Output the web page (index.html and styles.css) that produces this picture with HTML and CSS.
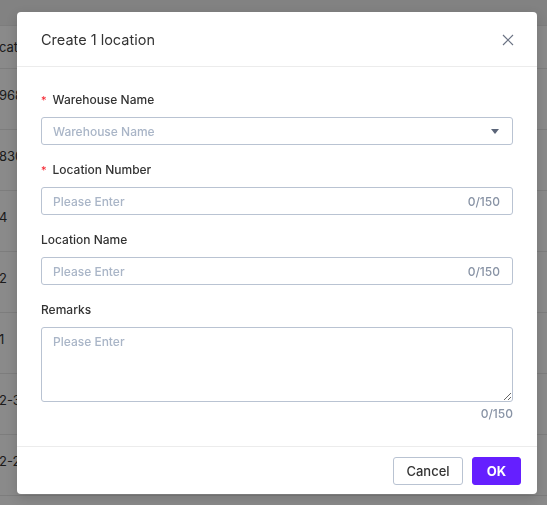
FILE: index.html
```html
<!DOCTYPE html>
<html>
<head>
<meta charset="utf-8">
<link rel="stylesheet" href="styles.css">
</head>
<body>
<div class="page">
  <div class="topbar"></div>
  <div class="row head"><span class="cell">cat</span></div>
  <div class="row"><span class="cell">968</span></div>
  <div class="row"><span class="cell">830</span></div>
  <div class="row"><span class="cell">4</span></div>
  <div class="row"><span class="cell">2</span></div>
  <div class="row"><span class="cell">1</span></div>
  <div class="row"><span class="cell">2-3</span></div>
  <div class="row"><span class="cell">2-2</span></div>
  <div class="row"><span class="cell"></span></div>
</div>
<div class="overlay"></div>
<div class="dialog">
  <div class="dialog-header">
    <span class="title">Create 1 location</span>
    <svg class="close" width="12" height="12" viewBox="0 0 12 12"><path d="M1 1L11 11M11 1L1 11" stroke="#6b7384" stroke-width="1.2" fill="none"/></svg>
  </div>
  <div class="dialog-body">
    <div class="field">
      <label class="label"><span class="req">*</span>Warehouse Name</label>
      <div class="control">
        <input class="inp" placeholder="Warehouse Name">
        <svg class="caret" width="8" height="5" viewBox="0 0 8 5"><path d="M0 0H8L4 5Z" fill="#5b6579"/></svg>
      </div>
    </div>
    <div class="field">
      <label class="label"><span class="req">*</span>Location Number</label>
      <div class="control">
        <input class="inp" placeholder="Please Enter">
        <span class="count">0/150</span>
      </div>
    </div>
    <div class="field">
      <label class="label">Location Name</label>
      <div class="control">
        <input class="inp" placeholder="Please Enter">
        <span class="count">0/150</span>
      </div>
    </div>
    <div class="field last">
      <label class="label">Remarks</label>
      <textarea class="area" placeholder="Please Enter"></textarea>
      <div class="area-count">0/150</div>
    </div>
  </div>
  <div class="dialog-footer">
    <button class="btn cancel">Cancel</button>
    <button class="btn ok">OK</button>
  </div>
</div>
</body>
</html>
```
FILE: styles.css
```css
html, body {
  margin: 0;
  padding: 0;
}
body {
  width: 547px;
  height: 505px;
  overflow: hidden;
  font-family: Inter, "Noto Sans", sans-serif;
  background: #ffffff;
}
.page {
  height: 505px;
  overflow: hidden;
  display: flex;
  flex-direction: column;
}
.topbar {
  height: 25px;
  flex: none;
  background: #f0f0f0;
}
.row {
  height: 60px;
  box-sizing: content-box;
  flex: none;
  border-top: 1px solid #e8e8e8;
  display: flex;
  align-items: center;
  font-size: 13px;
  color: #333;
}
.row:not(.head) {
  height: 51px;
  padding-bottom: 9px;
}
.row.head {
  height: 42px;
}
.cell {
  margin-left: -1px;
}
.overlay {
  position: fixed;
  inset: 0;
  background: rgba(0, 0, 0, 0.46);
}
.dialog {
  position: absolute;
  left: 17px;
  top: 12px;
  width: 520px;
  background: #fff;
  border-radius: 4px;
  box-shadow: 0 4px 12px rgba(0,0,0,0.15);
  display: flex;
  flex-direction: column;
}
.dialog-header {
  height: 54px;
  border-bottom: 1px solid #ececec;
  display: flex;
  align-items: center;
  justify-content: space-between;
  padding: 0 23px 0 24px;
}
.title {
  font-size: 14.5px;
  color: #333;
}
.close {
  display: block;
  margin-top: 1px;
}
.dialog-body {
  padding: 23px 24px 22px;
  display: flex;
  flex-direction: column;
}
.field {
  display: flex;
  flex-direction: column;
  margin-bottom: 15px;
}
.field.last {
  margin-bottom: 0;
}
.label {
  font-size: 12px;
  font-weight: 500;
  line-height: 20px;
  color: #333;
  margin-bottom: 7px;
}
.req {
  color: #f5222d;
  margin-right: 6px;
  font-size: 11px;
  font-weight: 400;
}
.control {
  height: 26px;
  border: 1px solid #b9c3d2;
  border-radius: 3px;
  display: flex;
  align-items: center;
  padding: 0 12px 0 11px;
}
.inp {
  flex: 1;
  border: none;
  outline: none;
  padding: 0;
  font-family: inherit;
  font-size: 12px;
  font-weight: 500;
  color: #333;
  background: transparent;
  min-width: 0;
}
.inp::placeholder, .area::placeholder {
  color: #a9b5c7;
}
.caret {
  margin-right: 1px;
}
.count {
  font-size: 12px;
  font-weight: 500;
  color: #8893a5;
}
.area {
  height: 75px;
  box-sizing: border-box;
  border: 1px solid #b9c3d2;
  border-radius: 3px;
  padding: 6px 11px;
  font-family: inherit;
  font-size: 12px;
  font-weight: 500;
  outline: none;
  resize: vertical;
  margin: 0;
}
.area-count {
  text-align: right;
  font-size: 12px;
  font-weight: 500;
  line-height: 20px;
  color: #8893a5;
  margin-top: 2px;
}
.dialog-footer {
  border-top: 1px solid #ececec;
  display: flex;
  justify-content: flex-end;
  gap: 9px;
  padding: 10px 16px 9px;
}
.btn {
  height: 28px;
  border-radius: 3px;
  font-family: inherit;
  font-size: 13px;
  padding: 0;
  cursor: pointer;
}
.cancel {
  width: 70px;
  background: #fff;
  border: 1px solid #b9c3d2;
  color: #333;
  font-weight: 500;
}
.ok {
  width: 49px;
  background: #651fff;
  border: 1px solid #651fff;
  color: #fff;
  font-weight: 700;
}
```
